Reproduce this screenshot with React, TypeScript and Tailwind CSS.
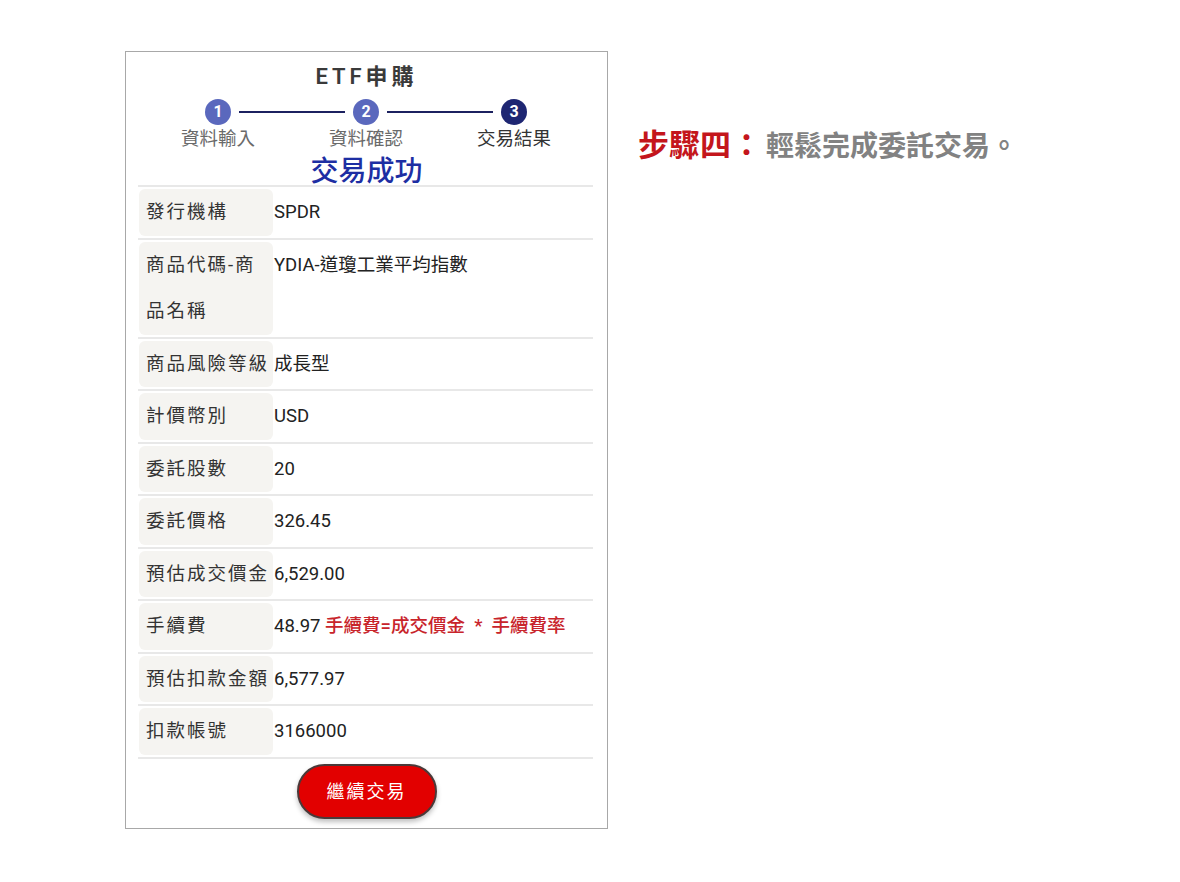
import React from 'react';

const FONT = 'font-["Roboto","Noto_Sans_CJK_TC",sans-serif]';

interface Row {
  label: string;
  value: React.ReactNode;
}

const rows: Row[] = [
  { label: '發行機構', value: 'SPDR' },
  { label: '商品代碼-商品名稱', value: 'YDIA-道瓊工業平均指數' },
  { label: '商品風險等級', value: '成長型' },
  { label: '計價幣別', value: 'USD' },
  { label: '委託股數', value: '20' },
  { label: '委託價格', value: '326.45' },
  { label: '預估成交價金', value: '6,529.00' },
  {
    label: '手續費',
    value: (
      <>
        48.97{' '}
        <span className="text-[#c8242b] font-medium whitespace-pre">手續費=成交價金  *  手續費率</span>
      </>
    ),
  },
  { label: '預估扣款金額', value: '6,577.97' },
  { label: '扣款帳號', value: '3166000' },
];

const StepDot: React.FC<{ n: number; active?: boolean }> = ({ n, active }) => (
  <div
    className={`w-[26px] h-[26px] rounded-full flex items-center justify-center text-white text-[16px] font-bold ${
      active ? 'bg-[#1e2672]' : 'bg-[#5a68bd]'
    }`}
  >
    {n}
  </div>
);

const App: React.FC = () => {
  return (
    <div className={`w-[1180px] h-[882px] bg-white flex items-start pl-[125px] pt-[51px] ${FONT}`}>
      {/* Phone frame */}
      <div className="w-[483px] h-[778px] border border-[#a8a8a8] flex flex-col">
        <h1 className="text-center text-[22px] leading-[28px] font-semibold text-[#3a3a3a] tracking-[4px] mt-[11px]">
          ETF申購
        </h1>

        {/* Steps */}
        <div className="flex items-center ml-[79px] w-[322px] mt-[8px]">
          <StepDot n={1} />
          <div className="flex-1 h-[2px] bg-[#1c2160] mx-[8px]" />
          <StepDot n={2} />
          <div className="flex-1 h-[2px] bg-[#1c2160] mx-[8px]" />
          <StepDot n={3} active />
        </div>
        <div className="flex ml-[18px] mt-[2px] text-[18.5px] leading-[24px]">
          <div className="w-[148px] text-center text-[#6a6a6a]">資料輸入</div>
          <div className="w-[148px] text-center text-[#6a6a6a]">資料確認</div>
          <div className="w-[148px] text-center text-[#333]">交易結果</div>
        </div>

        <div className="text-center text-[28px] leading-[34px] text-[#1d2ea3] font-medium mt-[4px]">交易成功</div>

        {/* Detail table */}
        <div className="ml-[12px] w-[455px] mt-[-4px] border-t-2 border-[#e8e8e8]">
          {rows.map((r) => (
            <div key={r.label} className="flex items-start border-b-2 border-[#e8e8e8] py-[2px]">
              <div className="w-[134px] shrink-0 ml-[1px] bg-[#f5f4f1] rounded-[6px] pl-[7px] pr-[2px] text-[18.5px] leading-[46.5px] tracking-[2px] text-[#333]">
                {r.label}
              </div>
              <div className="pl-[1px] text-[18.5px] leading-[46.5px] text-[#222]">{r.value}</div>
            </div>
          ))}
        </div>

        <div className="flex justify-center mt-[5px]">
          <button className="w-[140px] h-[55px] rounded-full bg-[#e20000] border-2 border-[#4a3a3a] text-white text-[18px] tracking-[2px] shadow-[0_3px_5px_rgba(0,0,0,0.25)]">
            繼續交易
          </button>
        </div>
      </div>

      {/* Caption */}
      <div className="ml-[30px] mt-[72px] flex items-baseline">
        <span className="text-[31px] font-bold text-[#c4161c]">步驟四：</span>
        <span className="text-[28px] font-bold text-[#828282] ml-[4px]">輕鬆完成委託交易。</span>
      </div>
    </div>
  );
};

export default App;
